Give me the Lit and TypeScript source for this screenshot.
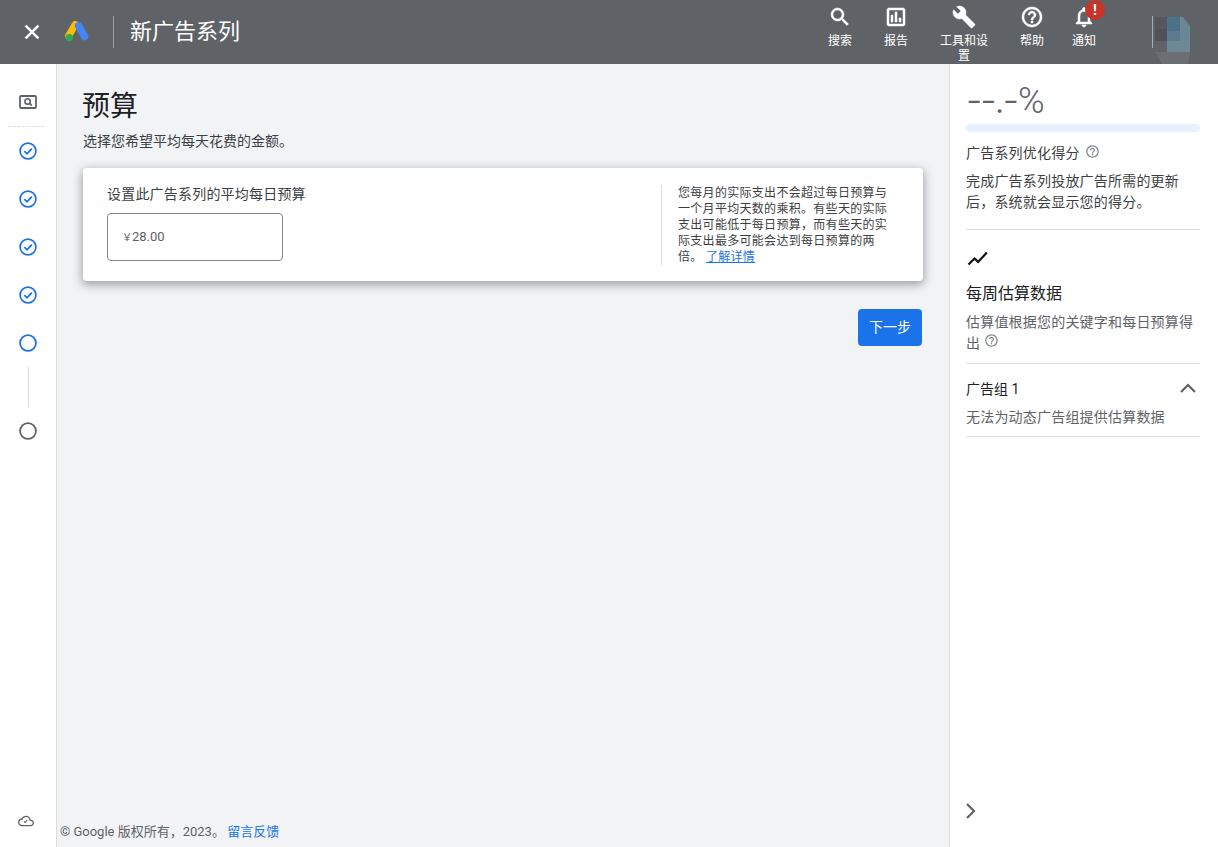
import { LitElement, css, html, svg } from 'lit';
import { customElement } from 'lit/decorators.js';

const icon = (d: string, size = 24) => html`<svg width="${size}" height="${size}" viewBox="0 0 24 24" fill="currentColor"><path d="${d}"></path></svg>`;

const HELP = 'M11 18h2v-2h-2v2zm1-16C6.48 2 2 6.48 2 12s4.48 10 10 10 10-4.48 10-10S17.52 2 12 2zm0 18c-4.41 0-8-3.59-8-8s3.59-8 8-8 8 3.59 8 8-3.59 8-8 8zm0-14c-2.21 0-4 1.79-4 4h2c0-1.1.9-2 2-2s2 .9 2 2c0 2-3 1.75-3 5h2c0-2.25 3-2.5 3-5 0-2.21-1.79-4-4-4z';

const navItems = [
  { label: '搜索', cls: 'w56', d: 'M15.5 14h-.79l-.28-.27A6.471 6.471 0 0 0 16 9.5 6.5 6.5 0 1 0 9.5 16c1.61 0 3.09-.59 4.23-1.57l.27.28v.79l5 4.99L20.49 19l-4.99-5zm-6 0C7.01 14 5 11.99 5 9.5S7.01 5 9.5 5 14 7.01 14 9.5 11.99 14 9.5 14z' },
  { label: '报告', cls: 'w56', d: 'M19 3H5c-1.1 0-2 .9-2 2v14c0 1.1.9 2 2 2h14c1.1 0 2-.9 2-2V5c0-1.1-.9-2-2-2zm0 16H5V5h14v14zM7 10h2v7H7zm4-3h2v10h-2zm4 6h2v4h-2z' },
  { label: '工具和设置', cls: 'w80', d: 'M22.7 19l-9.1-9.1c.9-2.3.4-5-1.5-6.9-2-2-5-2.4-7.4-1.3L9 6 6 9 1.6 4.7C.4 7.1.9 10.1 2.9 12.1c1.9 1.9 4.6 2.4 6.9 1.5l9.1 9.1c.4.4 1 .4 1.4 0l2.3-2.3c.5-.4.5-1.1.1-1.4z' },
  { label: '帮助', cls: 'w56', d: HELP },
  { label: '通知', cls: 'w48', d: 'M12 22c1.1 0 2-.9 2-2h-4c0 1.1.9 2 2 2zm6-6v-5c0-3.07-1.63-5.64-4.5-6.32V4c0-.83-.67-1.5-1.5-1.5s-1.5.67-1.5 1.5v.68C7.64 5.36 6 7.92 6 11v5l-2 2v1h16v-1l-2-2zm-2 1H8v-6c0-2.48 1.51-4.5 4-4.5s4 2.02 4 4.5v6z', badge: true },
];

const doneStep = html`<div class="step blue">
  <svg width="20" height="20" viewBox="0 0 20 20" fill="none" stroke="currentColor">
    <circle cx="10" cy="10" r="7.9" stroke-width="1.7"></circle>
    <path d="M6.4 10.2l2.6 2.6 4.8-5.2" stroke-width="1.8"></path>
  </svg>
</div>`;

const openStep = (cls: string) => html`<div class="step ${cls}">
  <svg width="20" height="20" viewBox="0 0 20 20" fill="none" stroke="currentColor">
    <circle cx="10" cy="10" r="7.9" stroke-width="1.8"></circle>
  </svg>
</div>`;

const adsLogo = svg`
  <path d="M10.2 3.4 3.6 15" stroke="#fbbc04" stroke-width="7" stroke-linecap="round" fill="none"></path>
  <path d="M13.6 4.8 19.6 15.6" stroke="#4285f4" stroke-width="7.4" stroke-linecap="round" fill="none"></path>
  <circle cx="4.2" cy="16.6" r="3.7" fill="#34a853"></circle>
`;

@customElement('app-root')
export class AppRoot extends LitElement {
  render() {
    return html`
      <header class="topbar">
        <div class="close">${icon('M19 6.41 17.59 5 12 10.59 6.41 5 5 6.41 10.59 12 5 17.59 6.41 19 12 13.41 17.59 19 19 17.59 13.41 12z', 24)}</div>
        <svg class="logo" width="24" height="21" viewBox="0 0 24 21">${adsLogo}</svg>
        <div class="head-sep"></div>
        <div class="head-title">新广告系列</div>
        <nav class="nav">
          ${navItems.map(
            (item) => html`<div class="nav-item ${item.cls}">
              <div class="nav-icon">
                ${icon(item.d)}
                ${item.badge ? html`<span class="badge">!</span>` : ''}
              </div>
              <div class="nav-label">${item.label}</div>
            </div>`
          )}
        </nav>
        <svg class="avatar" width="40" height="64" viewBox="0 0 40 64">
          <rect x="0" y="16" width="1" height="32" fill="#a9abae"></rect>
          <rect x="3" y="17" width="12" height="12" fill="#54575c"></rect>
          <rect x="3" y="29" width="12" height="12" fill="#4f5257"></rect>
          <rect x="15" y="17" width="13" height="14" fill="#4d7187"></rect>
          <rect x="15" y="31" width="13" height="10" fill="#5a7b90"></rect>
          <path d="M28 17h3l7 9v15H28z" fill="#6b8796"></path>
          <path d="M15 41H38V52H15z" fill="#6f8896"></path>
          <path d="M3 52H38L36 64H10z" fill="#6b6e73"></path>
        </svg>
      </header>

      <div class="body">
        <aside class="rail">
          <div class="step first">
            <svg width="18" height="14" viewBox="0 0 18 14" fill="none" stroke="#5f6368">
              <rect x="1" y="1" width="16" height="12" rx="1" stroke-width="1.8"></rect>
              <circle cx="8.6" cy="6.4" r="2.7" stroke-width="1.6"></circle>
              <path d="M10.6 8.4l2.2 2.2" stroke-width="1.7"></path>
            </svg>
          </div>
          ${doneStep}${doneStep}${doneStep}${doneStep}
          ${openStep('blue')}
          <div class="rail-line"></div>
          ${openStep('grey')}
          <div class="rail-cloud">
            <svg width="16" height="16" viewBox="0 0 24 24" fill="#5f6368">
              <path d="M19.35 10.04C18.67 6.59 15.64 4 12 4 9.11 4 6.6 5.64 5.35 8.04 2.34 8.36 0 10.91 0 14c0 3.31 2.69 6 6 6h13c2.76 0 5-2.24 5-5 0-2.64-2.05-4.78-4.65-4.96zM19 18H6c-2.21 0-4-1.79-4-4s1.79-4 4-4h.71C7.37 7.69 9.48 6 12 6c3.04 0 5.5 2.46 5.5 5.5v.5H19c1.66 0 3 1.34 3 3s-1.34 3-3 3z"></path>
              <path d="M8.5 13.2l2 2 4-4.4-1.2-1-2.8 3.2-.9-.9z"></path>
            </svg>
          </div>
        </aside>

        <main class="main">
          <h1 class="page-title">预算</h1>
          <p class="page-sub">选择您希望平均每天花费的金额。</p>
          <section class="card">
            <div class="card-left">
              <div class="card-label">设置此广告系列的平均每日预算</div>
              <div class="input"><span class="yen">￥</span>28.00</div>
            </div>
            <div class="card-help">
              您每月的实际支出不会超过每日预算与一个月平均天数的乘积。有些天的实际支出可能低于每日预算，而有些天的实际支出最多可能会达到每日预算的两倍。
              <a class="link">了解详情</a>
            </div>
          </section>
          <div class="actions"><button class="next">下一步</button></div>
          <footer class="footer">© Google 版权所有，2023。 <a class="feedback">留言反馈</a></footer>
        </main>

        <aside class="panel">
          <div class="score"><span class="dashes">--.-</span>%</div>
          <div class="bar"></div>
          <div class="score-title">广告系列优化得分 <span class="q-side">${icon(HELP, 15)}</span></div>
          <p class="copy">完成广告系列投放广告所需的更新后，系统就会显示您的得分。</p>
          <div class="rule first-rule"></div>
          <svg class="trend" width="24" height="24" viewBox="0 0 24 24" fill="none" stroke="#111" stroke-width="2.2">
            <path d="M2.5 17.5l6-6 3.6 3.4 8.8-9.4"></path>
          </svg>
          <div class="week">每周估算数据</div>
          <p class="copy soft week-copy">估算值根据您的关键字和每日预算得出 <span class="q">${icon(HELP, 15)}</span></p>
          <div class="rule"></div>
          <div class="group-head">
            <span>广告组 1</span>
            <svg width="24" height="24" viewBox="0 0 24 24" fill="none" stroke="#5f6368" stroke-width="2.2">
              <path d="M5 16l7-7 7 7"></path>
            </svg>
          </div>
          <p class="copy soft group-copy">无法为动态广告组提供估算数据</p>
          <div class="rule"></div>
          <svg class="expand" width="24" height="24" viewBox="0 0 24 24" fill="none" stroke="#5f6368" stroke-width="2.2">
            <path d="M9 5l7 7-7 7"></path>
          </svg>
        </aside>
      </div>
    `;
  }

  static styles = css`
    :host {
      display: flex;
      flex-direction: column;
      height: 847px;
      overflow: hidden;
      background-color: #fff;
      font-family: Roboto, 'Noto Sans CJK SC', sans-serif;
      color: #3c4043;
    }

    p,
    h1 {
      margin: 0;
      padding: 0;
      font-weight: 400;
    }

    .topbar {
      display: flex;
      align-items: flex-start;
      flex: none;
      height: 64px;
      background-color: #5f6368;
      color: #fff;
    }

    .close {
      display: flex;
      margin: 20px 0 0 20px;
    }

    .close svg,
    .nav-icon svg {
      stroke: currentColor;
      stroke-width: 0.5;
    }

    .logo {
      margin: 21px 0 0 21px;
    }

    .head-sep {
      width: 1px;
      height: 32px;
      margin: 16px 16px 0 24px;
      background-color: #9aa0a6;
    }

    .head-title {
      font-size: 22px;
      line-height: 64px;
    }

    .nav {
      display: flex;
      margin-left: auto;
    }

    .nav-item {
      display: flex;
      flex-direction: column;
      align-items: center;
      padding-top: 5px;
      box-sizing: border-box;
    }

    .w56 {
      width: 56px;
    }

    .w80 {
      width: 80px;
      padding-left: 16px;
      padding-right: 16px;
    }

    .w48 {
      width: 48px;
    }

    .nav-icon {
      position: relative;
      display: flex;
      height: 24px;
    }

    .nav-label {
      margin-top: 5px;
      font-size: 12px;
      line-height: 15px;
      text-align: center;
    }

    .badge {
      position: absolute;
      top: -5px;
      left: 13px;
      width: 20px;
      height: 20px;
      border-radius: 50%;
      background-color: #c5352a;
      font-size: 14px;
      font-weight: 700;
      line-height: 20px;
      text-align: center;
    }

    .avatar {
      margin: 0 26px 0 44px;
    }

    .body {
      display: flex;
      flex: 1;
      min-height: 0;
    }

    .rail {
      display: flex;
      flex-direction: column;
      flex: none;
      box-sizing: border-box;
      width: 57px;
      padding-top: 15px;
      border-right: 1px solid #dadce0;
    }

    .step {
      display: flex;
      align-items: center;
      justify-content: center;
      flex: none;
      height: 48px;
    }

    .first {
      margin: 0 12px 0 8px;
      padding: 0 0 2px 4px;
      border-bottom: 1px dashed #dadce0;
      box-sizing: border-box;
    }

    .blue {
      color: #1f6fe8;
    }

    .grey {
      color: #5f6368;
    }

    .rail-line {
      flex: none;
      align-self: center;
      width: 1px;
      height: 40px;
      background-color: #dadce0;
    }

    .rail-cloud {
      display: flex;
      justify-content: center;
      margin-top: auto;
      padding: 0 4px 18px 0;
    }

    .main {
      display: flex;
      flex-direction: column;
      flex: 1;
      min-width: 0;
      padding: 0 26px 0 26px;
      background-color: #f1f3f5;
    }

    .page-title {
      margin: 24px 0 0 -1px;
      font-size: 28px;
      line-height: 38px;
      color: #202124;
    }

    .page-sub {
      margin-top: 5px;
      font-size: 14px;
      line-height: 20px;
    }

    .card {
      display: flex;
      justify-content: space-between;
      height: 113px;
      margin-top: 17px;
      box-sizing: border-box;
      border-radius: 4px;
      background-color: #fff;
      box-shadow: 0 3px 10px 1px rgba(60, 64, 67, 0.45);
    }

    .card-left {
      padding: 16px 0 0 24px;
    }

    .card-label {
      font-size: 14px;
      line-height: 20px;
      letter-spacing: 0.2px;
    }

    .input {
      width: 176px;
      height: 48px;
      margin-top: 9px;
      padding-left: 14px;
      box-sizing: border-box;
      border: 1px solid #80868b;
      border-radius: 4px;
      font-size: 13px;
      line-height: 46px;
      color: #5f6368;
    }

    .yen {
      font-size: 10px;
    }

    .card-help {
      box-sizing: border-box;
      width: 262px;
      height: 80px;
      margin-top: 17px;
      padding: 0 34px 0 16px;
      border-left: 1px solid #dadce0;
      font-size: 12px;
      line-height: 16px;
      letter-spacing: 0.3px;
    }

    .link {
      color: #1a73e8;
      text-decoration: underline;
    }

    .actions {
      display: flex;
      justify-content: flex-end;
      margin-top: 28px;
      padding-right: 1px;
    }

    .next {
      all: unset;
      width: 64px;
      height: 37px;
      border-radius: 4px;
      background-color: #1a73e8;
      color: #fff;
      font-size: 14px;
      line-height: 37px;
      text-align: center;
    }

    .footer {
      margin: auto 0 0 -23px;
      padding-bottom: 6px;
      font-size: 13px;
      line-height: 18px;
      color: #5f6368;
    }

    .feedback {
      margin-left: -1px;
      color: #1a73e8;
    }

    .panel {
      display: flex;
      flex-direction: column;
      flex: none;
      box-sizing: border-box;
      width: 269px;
      padding: 14px 18px 0 16px;
      border-left: 1px solid #dadce0;
    }

    .score {
      flex: none;
      height: 44px;
      font-size: 36px;
      font-weight: 300;
      line-height: 44px;
      color: #5f6368;
    }

    .dashes {
      font-family: Inter, sans-serif;
      font-weight: 300;
      letter-spacing: -2px;
      margin-right: 1px;
    }

    .bar {
      height: 8px;
      margin-top: 2px;
      border-radius: 4px;
      background-color: #e8f0fe;
    }

    .score-title {
      display: flex;
      align-items: flex-start;
      gap: 5px;
      margin-top: 11px;
      font-size: 14px;
      line-height: 20px;
      letter-spacing: 0.2px;
    }

    .q-side {
      display: flex;
      margin-top: 1px;
      color: #80868b;
    }

    .q {
      display: inline-flex;
      margin-top: -4px;
      color: #80868b;
      vertical-align: 0;
    }

    .copy {
      font-size: 14px;
      line-height: 20.5px;
      letter-spacing: 0.2px;
    }

    .soft {
      color: #5f6368;
    }

    .score-title + .copy {
      margin-top: 8px;
    }

    .rule {
      flex: none;
      height: 1px;
      background-color: #dadce0;
    }

    .first-rule {
      margin-top: 17px;
    }

    .trend {
      margin-top: 17px;
    }

    .week {
      margin-top: 11px;
      font-size: 16px;
      line-height: 24px;
      color: #202124;
    }

    .week-copy {
      margin: 6px 0 10px;
    }

    .group-head {
      display: flex;
      justify-content: space-between;
      align-items: center;
      height: 24px;
      margin-top: 12px;
      font-size: 14px;
      color: #202124;
    }

    .group-copy {
      margin: 7px 0 8px;
    }

    .expand {
      margin: auto 0 24px -8px;
    }
  `;
}

declare global {
  interface HTMLElementTagNameMap {
    'app-root': AppRoot;
  }
}
